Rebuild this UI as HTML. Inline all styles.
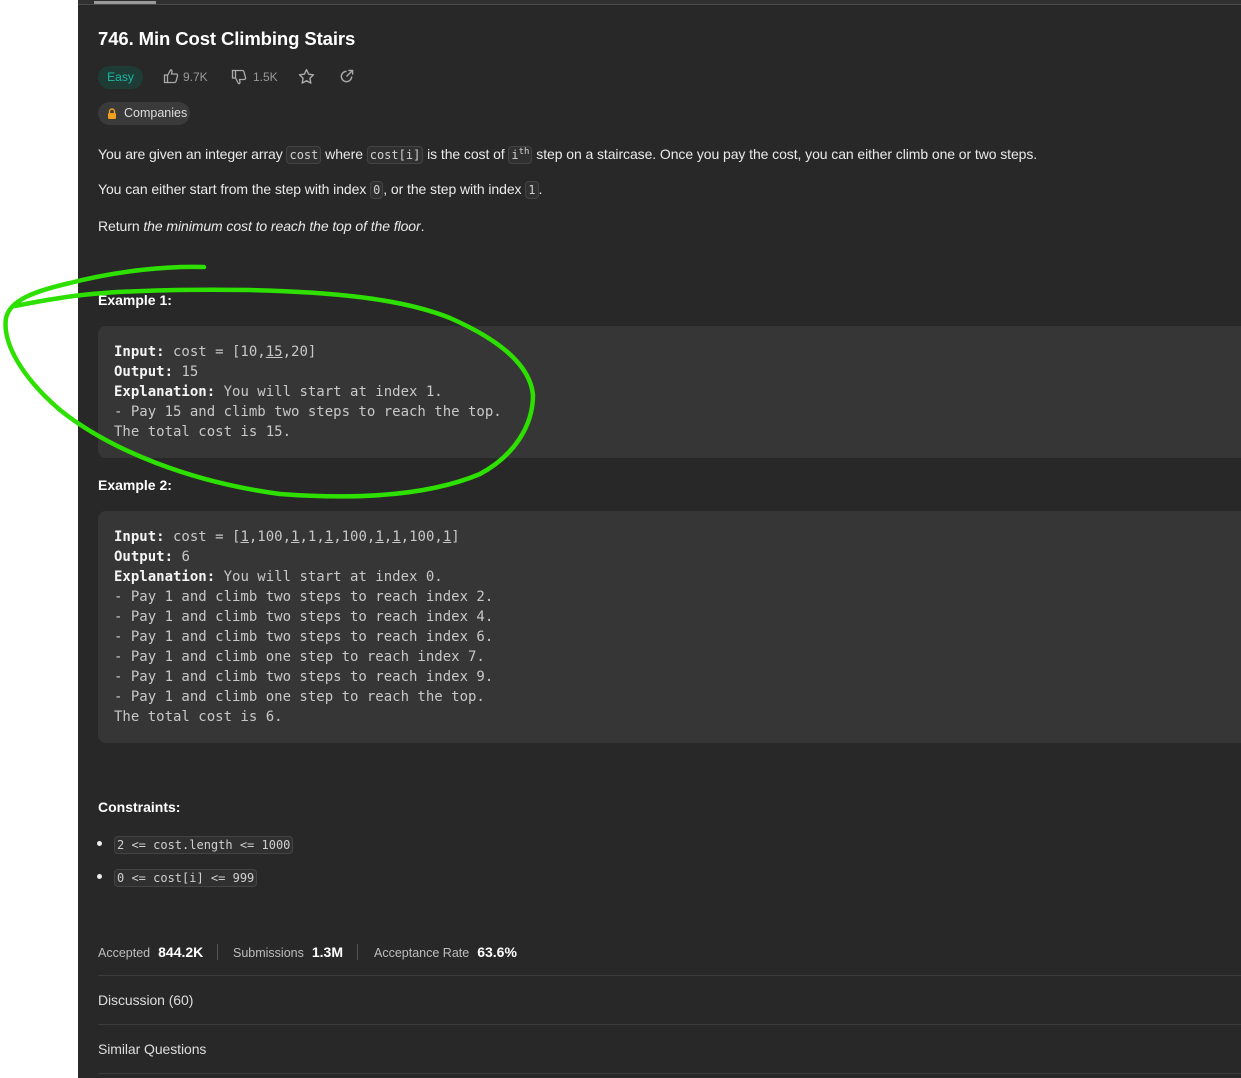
<!DOCTYPE html>
<html><head><meta charset="utf-8"><style>
*{margin:0;padding:0;box-sizing:border-box}
body{width:1241px;height:1078px;background:#fff;overflow:hidden;position:relative;font-family:"Liberation Sans",sans-serif;color:#eee}
#p{position:absolute;left:78px;top:0;width:1163px;height:1078px;background:#282828}
.a{position:absolute;white-space:nowrap}
.t{font-size:14px;color:#eaeaea;line-height:20px;letter-spacing:-0.08px}
code,.m{font-family:"DejaVu Sans Mono","Liberation Mono",monospace}
code.i{font-size:12px;color:#d0d0d0;background:#303030;border:1px solid #444;border-radius:4px;padding:1px 2px;letter-spacing:0}
.box{position:absolute;left:20px;width:1160px;background:#363636;border-radius:8px}
.pre{position:absolute;left:16px;font-size:14px;line-height:20px;color:#c8c8c8;white-space:pre;font-family:"DejaVu Sans Mono",monospace}
.pre b{color:#f5f5f5}
.pre u{text-decoration:underline}
.h{font-weight:bold;font-size:14px;color:#fff}
.hr{position:absolute;left:20px;right:0;height:1px;background:#3c3c3c}
.st{font-size:12.5px;color:#bdbdbd}
.st b{color:#fff;font-size:14px;margin-left:8px}
</style></head><body>
<div id="p">
<div class="a" style="left:0;top:0;width:1163px;height:4px;background:#303030"></div>
<div class="a" style="left:0;top:4px;width:1163px;height:1px;background:#4a4a4a"></div>
<div class="a" style="left:16px;top:1px;width:62px;height:3px;background:#9a9a9a"></div>
<div class="a" style="left:20px;top:28px;font-size:18.5px;font-weight:bold;color:#fff;letter-spacing:-0.1px">746. Min Cost Climbing Stairs</div>
<div class="a" style="left:20px;top:66px;width:45px;height:23px;border-radius:12px;background:#1f3b36;color:#1cb8a3;font-size:12px;line-height:23px;text-align:center">Easy</div>
<svg class="a" style="left:85px;top:68px" width="16" height="16" viewBox="0 0 16 16" fill="none" stroke="#aaa" stroke-width="1.3"><path d="M1.5 7h3v7.5h-3z M4.5 7.5 L7.5 2 Q9 1.5 9 3.5 L8.5 6 H13.5 Q15 6.5 14.5 8 L13 13.5 Q12.5 14.5 11.5 14.5 H4.5"/></svg>
<div class="a" style="left:105px;top:70px;font-size:12px;color:#999">9.7K</div>
<svg class="a" style="left:153px;top:69px" width="16" height="16" viewBox="0 0 16 16" fill="none" stroke="#aaa" stroke-width="1.3"><path d="M1.5 1.5h3v7.5h-3z M4.5 9 L7.5 14.5 Q9 15 9 13 L8.5 10.5 H13.5 Q15 10 14.5 8.5 L13 3 Q12.5 1.5 11.5 1.5 H4.5"/></svg>
<div class="a" style="left:175px;top:70px;font-size:12px;color:#999">1.5K</div>
<svg class="a" style="left:220px;top:68px" width="17" height="17" viewBox="0 0 16 16" fill="none" stroke="#aaa" stroke-width="1.3"><path d="M8 1.5l2 4.3 4.6.6-3.4 3.2.9 4.6L8 12l-4.1 2.2.9-4.6L1.4 6.4 6 5.8z" stroke-linejoin="round"/></svg>
<svg class="a" style="left:261px;top:69px" width="15" height="15" viewBox="0 0 16 16" fill="none" stroke="#aaa" stroke-width="1.5"><path d="M13.5 8A5.5 5.5 0 1 1 8 2.5 M10 1.5h4.5V6 M14.5 1.5 8 8"/></svg>
<div class="a" style="left:20px;top:102px;width:92px;height:23px;border-radius:12px;background:#3a3a3a;font-size:12.5px;line-height:23px;color:#ddd;padding-left:26px">Companies</div>
<svg class="a" style="left:29px;top:108px" width="10" height="11" viewBox="0 0 10 11"><path d="M2.5 5V3.5a2.5 2.5 0 0 1 5 0V5" stroke="#f0a020" stroke-width="1.4" fill="none"/><rect x="1" y="5" width="8" height="6" rx="1" fill="#f0a020"/></svg>
<div class="a t" style="left:20px;top:142px">You are given an integer array <code class="i">cost</code> where <code class="i">cost[i]</code> is the cost of <code class="i">i<sup style="font-size:9px">th</sup></code> step on a staircase. Once you pay the cost, you can either climb one or two steps.</div>
<div class="a t" style="left:20px;top:179px">You can either start from the step with index <code class="i">0</code>, or the step with index <code class="i">1</code>.</div>
<div class="a t" style="left:20px;top:216px">Return <i>the minimum cost to reach the top of the floor</i>.</div>
<div class="a h" style="left:20px;top:292px">Example 1:</div>
<div class="box" style="top:326px;height:132px"><div class="pre" style="top:16px"><b>Input:</b> cost = [10,<u>15</u>,20]
<b>Output:</b> 15
<b>Explanation:</b> You will start at index 1.
- Pay 15 and climb two steps to reach the top.
The total cost is 15.</div></div>
<div class="a h" style="left:20px;top:477px">Example 2:</div>
<div class="box" style="top:511px;height:232px"><div class="pre" style="top:16px"><b>Input:</b> cost = [<u>1</u>,100,<u>1</u>,1,<u>1</u>,100,<u>1</u>,<u>1</u>,100,<u>1</u>]
<b>Output:</b> 6
<b>Explanation:</b> You will start at index 0.
- Pay 1 and climb two steps to reach index 2.
- Pay 1 and climb two steps to reach index 4.
- Pay 1 and climb two steps to reach index 6.
- Pay 1 and climb one step to reach index 7.
- Pay 1 and climb two steps to reach index 9.
- Pay 1 and climb one step to reach the top.
The total cost is 6.</div></div>
<div class="a h" style="left:20px;top:799px">Constraints:</div>
<div class="a" style="left:19px;top:841px;width:5px;height:5px;border-radius:50%;background:#eee"></div>
<div class="a t" style="left:36px;top:834px"><code class="i">2 &lt;= cost.length &lt;= 1000</code></div>
<div class="a" style="left:19px;top:874px;width:5px;height:5px;border-radius:50%;background:#eee"></div>
<div class="a t" style="left:36px;top:867px"><code class="i">0 &lt;= cost[i] &lt;= 999</code></div>
<div class="a st" style="left:20px;top:944px">Accepted<b>844.2K</b></div>
<div class="a" style="left:139px;top:944px;width:1px;height:16px;background:#555"></div>
<div class="a st" style="left:155px;top:944px">Submissions<b>1.3M</b></div>
<div class="a" style="left:279px;top:944px;width:1px;height:16px;background:#555"></div>
<div class="a st" style="left:296px;top:944px">Acceptance Rate<b>63.6%</b></div>
<div class="hr" style="top:975px"></div>
<div class="a t" style="left:20px;top:990px;color:#ddd">Discussion (60)</div>
<div class="hr" style="top:1024px"></div>
<div class="a t" style="left:20px;top:1039px;color:#ddd">Similar Questions</div>
<div class="hr" style="top:1073px"></div>
</div>
<svg class="a" style="left:0;top:0" width="1241" height="1078"><path d="M204 267 C170 266 120 270 70 283 C35 291 10 300 6 318 C2 345 25 380 60 410 C110 450 190 482 280 494 C360 500 430 495 480 474 C515 455 533 425 533 395 C530 365 500 340 450 318 C400 298 330 292 250 290 C180 289 110 290 60 298 C40 301 25 304 15 306" fill="none" stroke="#2ee000" stroke-width="4.5" stroke-linecap="round"/></svg>
</body></html>
